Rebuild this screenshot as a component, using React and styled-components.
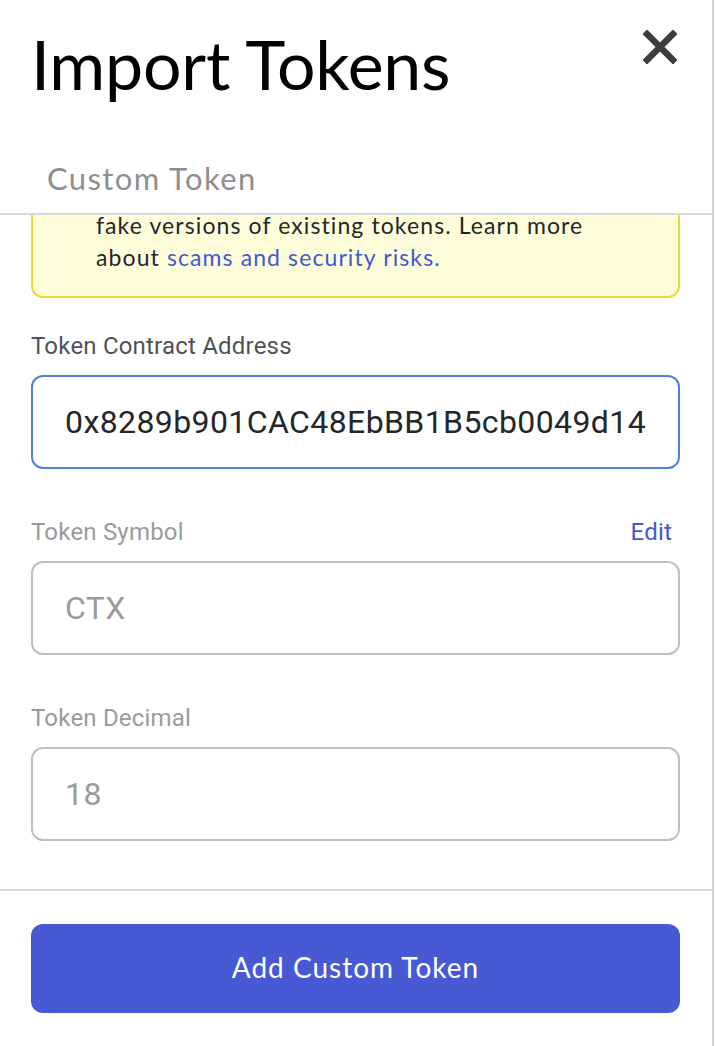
import React from 'react';
import styled, { createGlobalStyle } from 'styled-components';

const GlobalStyle = createGlobalStyle`
  html, body {
    margin: 0;
    padding: 0;
    background: #ffffff;
  }
  * {
    box-sizing: border-box;
  }
`;

const Page = styled.div`
  width: 714px;
  height: 100vh;
  display: flex;
  flex-direction: column;
  border-right: 2px solid #cfd1d3;
  background: #ffffff;
  font-family: Lato, "Noto Sans", sans-serif;
`;

const Header = styled.header`
  height: 215px;
  flex-shrink: 0;
  display: flex;
  flex-direction: column;
  padding: 23px 35px 0 31px;
  border-bottom: 2px solid #d6d9dc;
`;

const TitleRow = styled.div`
  display: flex;
  justify-content: space-between;
  align-items: flex-start;
`;

const Title = styled.h1`
  margin: 0;
  font-size: 68px;
  line-height: 82px;
  font-weight: 400;
  color: #000000;
  letter-spacing: -0.2px;
`;

const CloseButton = styled.button`
  margin-top: 7px;
  padding: 0;
  width: 34px;
  height: 34px;
  border: none;
  background: transparent;
  cursor: pointer;
  display: flex;
`;

const Tabs = styled.div`
  display: flex;
  margin-top: 55px;
`;

const Tab = styled.div`
  padding-left: 16px;
  font-size: 31px;
  line-height: 36px;
  letter-spacing: 1.4px;
  color: #8f8f8f;
`;

const Body = styled.main`
  flex: 1;
  min-height: 0;
  overflow: hidden;
  display: flex;
  flex-direction: column;
  justify-content: flex-end;
  padding: 0 32px 48px 31px;
`;

const Content = styled.div`
  flex-shrink: 0;
  display: flex;
  flex-direction: column;
`;

const Alert = styled.div`
  display: flex;
  gap: 23px;
  padding: 20px 16px 23px 16px;
  border: 2px solid #eedb2c;
  border-radius: 12px;
  background: #fdfdda;
  margin-bottom: 35px;
`;

const AlertIcon = styled.div`
  flex-shrink: 0;
  width: 24px;
  height: 24px;
  margin-top: 4px;
`;

const AlertText = styled.p`
  margin: 0;
  font-size: 23px;
  line-height: 32px;
  letter-spacing: 1.1px;
  color: #24272a;
`;

const AlertLink = styled.a`
  color: #4259d2;
  text-decoration: none;
  cursor: pointer;
`;

const Field = styled.div`
  display: flex;
  flex-direction: column;
  gap: 16px;
  margin-bottom: ${p => (p.$last ? '0' : '50px')};
`;

const LabelRow = styled.div`
  display: flex;
  justify-content: space-between;
  align-items: center;
  padding-right: 8px;
`;

const Label = styled.label`
  font-family: Roboto, "Liberation Sans", sans-serif;
  font-size: 24px;
  line-height: 26px;
  letter-spacing: 0.2px;
  color: ${p => (p.$muted ? '#9b9b9b' : '#4f5256')};
`;

const EditButton = styled.button`
  padding: 0;
  border: none;
  background: transparent;
  font-family: Roboto, "Liberation Sans", sans-serif;
  font-size: 24px;
  line-height: 26px;
  letter-spacing: 0.2px;
  color: #4259d2;
  cursor: pointer;
`;

const Input = styled.input`
  width: 100%;
  height: 94px;
  padding: 0 16px 0 32px;
  border: 2px solid ${p => (p.$active ? '#5080dc' : '#bbc0c5')};
  border-radius: 12px;
  background: #ffffff;
  font-family: Roboto, "Liberation Sans", sans-serif;
  font-size: 32px;
  letter-spacing: 0.4px;
  color: ${p => (p.$active ? '#24272a' : '#9b9b9b')};
  outline: none;

  &:disabled {
    background: #ffffff;
    -webkit-text-fill-color: #9b9b9b;
    opacity: 1;
  }
`;

const Footer = styled.footer`
  flex-shrink: 0;
  border-top: 2px solid #d6d9dc;
  padding: 33px 32px 33px 31px;
`;

const PrimaryButton = styled.button`
  width: 100%;
  height: 89px;
  border: none;
  border-radius: 12px;
  background: #4859d4;
  color: #ffffff;
  font-family: Lato, "Noto Sans", sans-serif;
  font-size: 28px;
  letter-spacing: 1px;
  padding: 0 0 4px;
  cursor: pointer;
`;

const CloseIcon = () => (
  <svg width="34" height="34" viewBox="0 0 34 34">
    <path d="M4 4 L30 30 M30 4 L4 30" stroke="#3d3d3d" strokeWidth="6.5" strokeLinecap="square" />
  </svg>
);

const WarningIcon = () => (
  <svg width="24" height="24" viewBox="0 0 24 24">
    <path d="M12 2 L23 21 H1 Z" fill="#f8c000" />
    <rect x="11" y="8" width="2" height="7" fill="#24272a" />
    <rect x="11" y="16.5" width="2" height="2" fill="#24272a" />
  </svg>
);

export default function App() {
  return (
    <>
      <GlobalStyle />
      <Page>
        <Header>
          <TitleRow>
            <Title>Import Tokens</Title>
            <CloseButton aria-label="Close">
              <CloseIcon />
            </CloseButton>
          </TitleRow>
          <Tabs>
            <Tab>Custom Token</Tab>
          </Tabs>
        </Header>

        <Body>
          <Content>
            <Alert>
              <AlertIcon>
                <WarningIcon />
              </AlertIcon>
              <AlertText>
                Anyone can create a token, including creating
                <br />
                fake versions of existing tokens. Learn more
                <br />
                about <AlertLink>scams and security risks.</AlertLink>
              </AlertText>
            </Alert>

            <Field>
              <LabelRow>
                <Label htmlFor="address">Token Contract Address</Label>
              </LabelRow>
              <Input id="address" $active defaultValue="0x8289b901CAC48EbBB1B5cb0049d14" />
            </Field>

            <Field>
              <LabelRow>
                <Label htmlFor="symbol" $muted>Token Symbol</Label>
                <EditButton type="button">Edit</EditButton>
              </LabelRow>
              <Input id="symbol" disabled defaultValue="CTX" />
            </Field>

            <Field $last>
              <LabelRow>
                <Label htmlFor="decimal" $muted>Token Decimal</Label>
              </LabelRow>
              <Input id="decimal" disabled defaultValue="18" />
            </Field>
          </Content>
        </Body>

        <Footer>
          <PrimaryButton type="button">Add Custom Token</PrimaryButton>
        </Footer>
      </Page>
    </>
  );
}
